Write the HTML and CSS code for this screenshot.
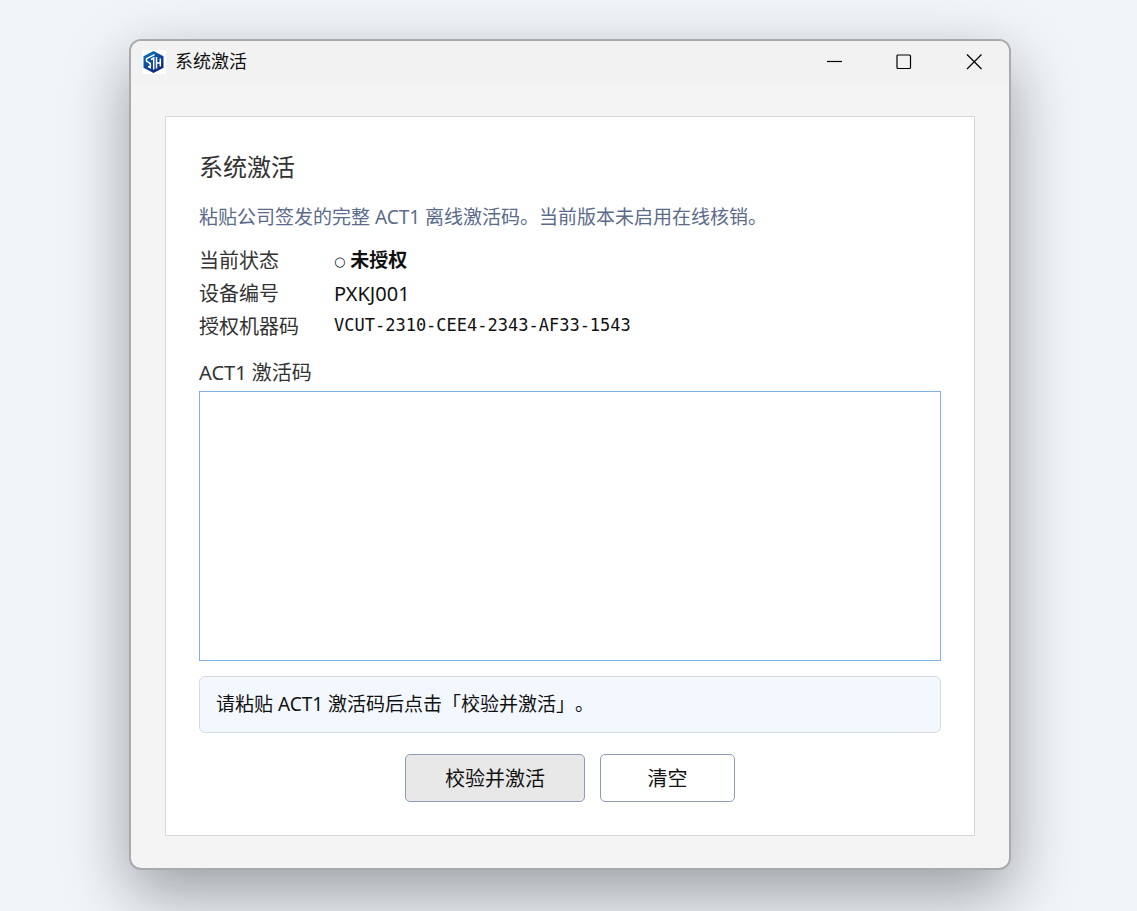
FILE: index.html
```
<!DOCTYPE html>
<html lang="zh-CN">
<head>
    <meta charset="UTF-8">
    <meta name="viewport" content="width=device-width, initial-scale=1.0">
    <title>系统激活</title>
    <link rel="stylesheet" href="styles.css">
</head>

<body>
    <div class="window">
        <header class="titlebar">
            <svg class="logo" viewBox="0 0 24 24" aria-hidden="true">
                <defs>
                    <linearGradient id="logoBlue" gradientUnits="userSpaceOnUse" x1="4" y1="2" x2="18" y2="22">
                        <stop offset="0" stop-color="#0873b8"/>
                        <stop offset="1" stop-color="#101f7c"/>
                    </linearGradient>
                </defs>
                <rect width="24" height="24" fill="#fff"/>
                <path fill="url(#logoBlue)" d="M11.5 1 21.500 6.300V17.700L11.500 23 1.500 17.700V6.300Z"/>
                <path fill="none" stroke="#fff" stroke-width="1.5" d="M12.500 4.600 4.500 8.600V11.200L8.300 13.500V17.500L6 16.500M9 9.500 11.700 8V19.500M14.500 7V18.500M14.500 13H18M18.300 8.500V16.500"/>
            </svg>
            <span class="titlebar-text">系统激活</span>
            <div class="window-buttons">
                <button type="button" aria-label="最小化">
                    <svg viewBox="0 0 16 16"><path d="M1 7.500H16"/></svg>
                </button>
                <button type="button" aria-label="最大化">
                    <svg viewBox="0 0 16 16"><rect x="1" y="1" width="13.500" height="13.500" rx="1"/></svg>
                </button>
                <button type="button" aria-label="关闭">
                    <svg viewBox="0 0 16 16"><path d="M1 0.500 15.500 15M15.500 0.500 1 15"/></svg>
                </button>
            </div>
        </header>

        <main class="content">
            <form class="card">
                <h1>系统激活</h1>
                <p class="subtitle">粘贴公司签发的完整 ACT1 离线激活码。当前版本未启用在线核销。</p>

                <dl class="info">
                    <dt>当前状态</dt>
                    <dd class="status"><span class="status-dot">○</span> 未授权</dd>
                    <dt>设备编号</dt>
                    <dd>PXKJ001</dd>
                    <dt>授权机器码</dt>
                    <dd class="machine-code">VCUT-2310-CEE4-2343-AF33-1543</dd>
                </dl>

                <label for="code">ACT1 激活码</label>
                <textarea id="code" name="code"></textarea>

                <p class="hint">请粘贴 ACT1 激活码后点击「校验并激活」。</p>

                <div class="actions">
                    <button type="button" class="btn btn-primary">校验并激活</button>
                    <button type="reset" class="btn">清空</button>
                </div>
            </form>
        </main>
    </div>
</body>
</html>
```
FILE: styles.css
```
* {
    box-sizing: border-box;
}

body {
    margin: 0;
    padding: 39px 126px 41px 129px;
    background-color: #f1f5fa;
    font-family: "Noto Sans", "Noto Sans CJK SC", sans-serif;
    font-size: 20px;
    color: #111;
    text-spacing-trim: space-all;
}

.window {
    border: 2px solid #a8aaad;
    border-radius: 12px;
    background-color: #f4f4f4;
    box-shadow: 0 24px 64px rgba(0, 0, 0, 0.36);
}

/* title bar */
.titlebar {
    display: flex;
    align-items: center;
    height: 42px;
    padding-left: 11px;
    background-color: #f2f2f2;
    border-radius: 10px 10px 0 0;
}

.logo {
    width: 24px;
    height: 24px;
}

.titlebar-text {
    padding-bottom: 4px;
    margin-left: 9px;
    font-size: 18px;
}

.window-buttons {
    display: flex;
    margin-left: auto;
}

.window-buttons button {
    display: flex;
    align-items: center;
    justify-content: center;
    width: 70px;
    height: 42px;
    padding: 0;
    border: none;
    background: none;
}

.window-buttons svg {
    width: 16px;
    height: 16px;
    fill: none;
    stroke: #000;
    stroke-width: 1.2;
}

/* card */
.content {
    padding: 33px 34px 32px;
}

.card {
    padding: 30px 33px 33px;
    border: 1px solid #d8d8d8;
    background-color: #fff;
}

h1 {
    margin: 0;
    font-size: 24px;
    font-weight: normal;
    line-height: 40px;
    color: #333;
}

.subtitle {
    margin: 16px 0 13px;
    font-size: 19px;
    line-height: 28px;
    color: #5b6b8c;
}

.info {
    display: grid;
    grid-template-columns: 135px 1fr;
    margin: 0 0 16px;
    line-height: 33px;
}

.info dt {
    color: #333;
}

.info dd {
    margin: 0;
}

.info .status {
    font-size: 19px;
    font-weight: bold;
}

.status-dot {
    font-family: "DejaVu Sans", sans-serif;
    font-size: 13px;
    font-weight: normal;
    line-height: 1;
    vertical-align: 1px;
}

.info .machine-code {
    font-family: "DejaVu Sans Mono", monospace;
    font-size: 17px;
    line-height: 30px;
}

label {
    display: block;
    line-height: 28px;
    color: #333;
}

textarea {
    display: block;
    width: 100%;
    height: 270px;
    margin-top: 4px;
    padding: 10px;
    border: 1px solid #7fb2e8;
    background-color: #fff;
    font: inherit;
    resize: none;
    outline: none;
}

.hint {
    margin: 15px 0 21px;
    padding: 13px 16px;
    border: 1px solid #d8dade;
    border-radius: 6px;
    background-color: #f3f8ff;
    font-size: 19px;
    line-height: 29px;
}

.actions {
    display: flex;
    justify-content: center;
    gap: 15px;
}

.btn {
    width: 135px;
    height: 48px;
    padding: 0 0 2px;
    border: 1px solid #8d9db8;
    border-radius: 5px;
    background-color: #fff;
    font: inherit;
    color: #111;
}

.btn-primary {
    width: 180px;
    background-color: #e8e8e8;
}
```
